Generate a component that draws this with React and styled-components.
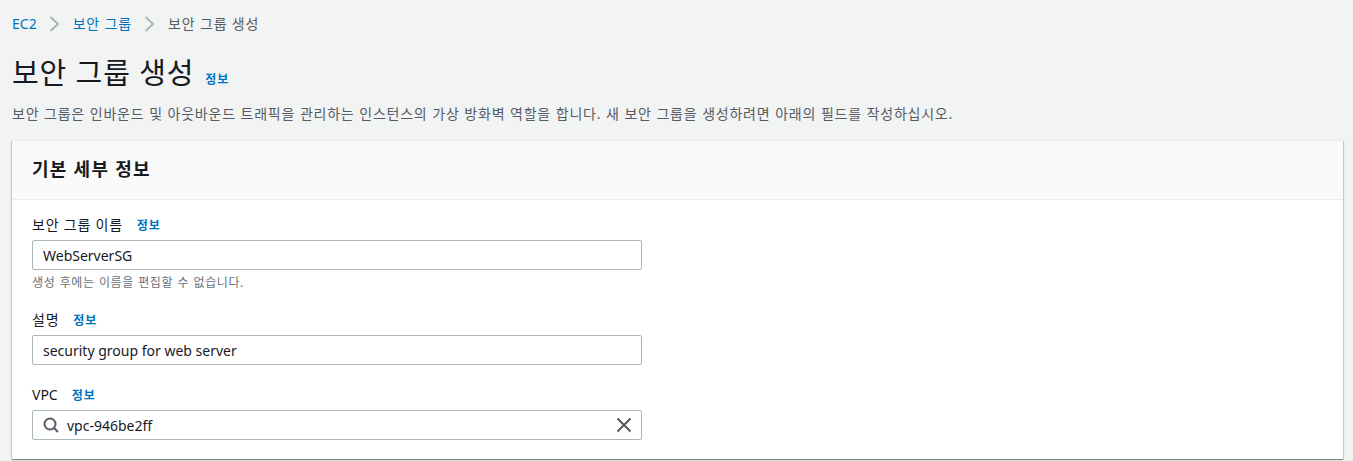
import React from 'react'
import styled, { createGlobalStyle } from 'styled-components'

const GlobalStyle = createGlobalStyle`
  html, body {
    margin: 0;
    padding: 0;
    height: 461px;
    overflow: hidden;
    background: #f2f3f3;
    font-family: 'Noto Sans', 'Noto Sans CJK KR', sans-serif;
    color: #16191f;
    letter-spacing: 0.056em;
  }
`

const Page = styled.div`
  padding: 15px 10px 0 12px;
`

const Crumbs = styled.nav`
  display: flex;
  align-items: center;
  height: 18px;
  font-size: 14px;
  line-height: 18px;
`

const Crumb = styled.a`
  color: ${(p) => (p.$current ? '#545b64' : '#0073bb')};
  letter-spacing: ${(p) => (p.$latin ? 0 : '0.06em')};
`

const Chevron = styled.svg`
  width: 12px;
  height: 16px;
  margin: 0 12px 0 12px;
  fill: none;
  stroke: #aab7b8;
  stroke-width: 2;
`

const TitleRow = styled.div`
  display: flex;
  align-items: baseline;
  margin-top: 18px;
  height: 44px;
`

const Title = styled.h1`
  margin: 0;
  font-size: 29px;
  line-height: 44px;
  font-weight: 400;
`

const Info = styled.a`
  color: #0073bb;
  font-size: 12px;
  font-weight: 700;
  margin-left: ${(p) => p.$gap}px;
`

const Description = styled.p`
  margin: 10px 0 0;
  font-size: 14px;
  line-height: 18px;
  letter-spacing: 0.055em;
  word-spacing: 0.35px;
  color: #545b64;
`

const Card = styled.section`
  margin-top: 17px;
  height: 319px;
  background: #fff;
  border-top: 1px solid #eaeded;
  box-shadow: 0 1px 1px 0 rgba(0, 28, 36, 0.3), 1px 1px 1px 0 rgba(0, 28, 36, 0.15),
    -1px 1px 1px 0 rgba(0, 28, 36, 0.15);
  box-sizing: border-box;
`

const CardHeader = styled.header`
  display: flex;
  align-items: center;
  height: 59px;
  padding: 0 0 3px 20px;
  background: #fafafa;
  border-bottom: 1px solid #eaeded;
  box-sizing: border-box;
`

const CardTitle = styled.h2`
  margin: 0;
  font-size: 18px;
  line-height: 22px;
  font-weight: 700;
  letter-spacing: 0.07em;
`

const CardBody = styled.div`
  display: flex;
  flex-direction: column;
  gap: 19px;
  padding: 14px 20px 0;
`

const Field = styled.div`
  width: 610px;
`

const LabelRow = styled.div`
  display: flex;
  align-items: center;
  height: 21px;
  margin-bottom: 5px;
`

const Label = styled.label`
  font-size: 14px;
  line-height: 20px;
  letter-spacing: ${(p) => (p.$latin ? 0 : '0.056em')};
`

const InputBox = styled.div`
  display: flex;
  align-items: center;
  height: 30px;
  padding: 0 9px 0 10px;
  background: #fff;
  border: 1px solid #aab7b8;
  border-radius: 2px;
  box-sizing: border-box;
  font-size: 14px;
  color: #16191f;
  letter-spacing: 0;
`

const Hint = styled.div`
  margin: 5px 0 -1px;
  font-size: 12px;
  line-height: 16px;
  letter-spacing: 0.051em;
  word-spacing: 0.6px;
  color: #687078;
`

const SearchIcon = styled.svg`
  width: 16px;
  height: 16px;
  margin-right: 8px;
  fill: none;
  stroke: #545b64;
  stroke-width: 2;
`

const ClearIcon = styled.svg`
  width: 16px;
  height: 16px;
  margin-left: auto;
  fill: none;
  stroke: #545b64;
  stroke-width: 2;
`

const Arrow = () => (
  <Chevron viewBox="0 0 12 16">
    <path d="M1.5 1 L9 8 L1.5 15" />
  </Chevron>
)

export default function App() {
  return (
    <Page>
      <GlobalStyle />
      <Crumbs>
        <Crumb $latin>EC2</Crumb>
        <Arrow />
        <Crumb>보안 그룹</Crumb>
        <Arrow />
        <Crumb $current>보안 그룹 생성</Crumb>
      </Crumbs>
      <TitleRow>
        <Title>보안 그룹 생성</Title>
        <Info $gap={11}>정보</Info>
      </TitleRow>
      <Description>
        보안 그룹은 인바운드 및 아웃바운드 트래픽을 관리하는 인스턴스의 가상 방화벽 역할을 합니다. 새 보안 그룹을 생성하려면 아래의 필드를 작성하십시오.
      </Description>
      <Card>
        <CardHeader>
          <CardTitle>기본 세부 정보</CardTitle>
        </CardHeader>
        <CardBody>
          <Field>
            <LabelRow>
              <Label>보안 그룹 이름</Label>
              <Info $gap={14}>정보</Info>
            </LabelRow>
            <InputBox>WebServerSG</InputBox>
            <Hint>생성 후에는 이름을 편집할 수 없습니다.</Hint>
          </Field>
          <Field>
            <LabelRow>
              <Label>설명</Label>
              <Info $gap={14}>정보</Info>
            </LabelRow>
            <InputBox>security group for web server</InputBox>
          </Field>
          <Field>
            <LabelRow>
              <Label $latin>VPC</Label>
              <Info $gap={14}>정보</Info>
            </LabelRow>
            <InputBox>
              <SearchIcon viewBox="0 0 16 16">
                <circle cx="7" cy="7" r="5.5" />
                <path d="M11 11 L15 15" />
              </SearchIcon>
              vpc-946be2ff
              <ClearIcon viewBox="0 0 16 16">
                <path d="M1.5 1.5 L14.5 14.5 M14.5 1.5 L1.5 14.5" />
              </ClearIcon>
            </InputBox>
          </Field>
        </CardBody>
      </Card>
    </Page>
  )
}
